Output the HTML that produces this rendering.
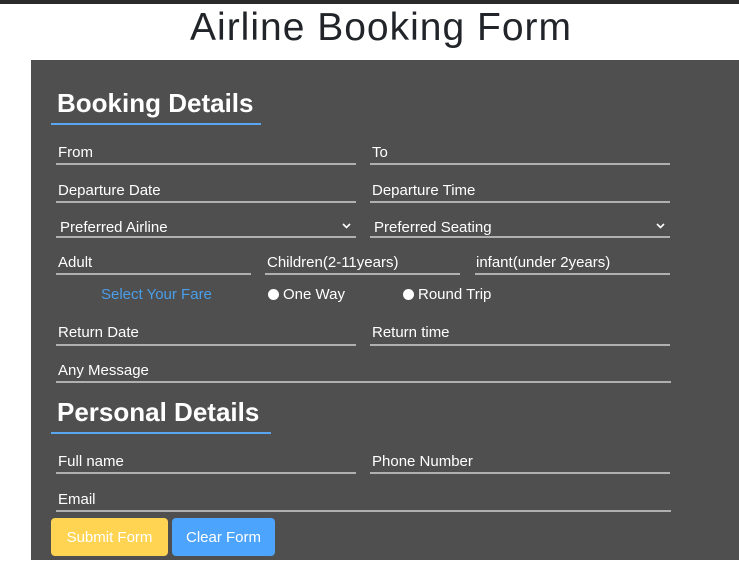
<!DOCTYPE html>
<html><head><style>
*{margin:0;padding:0;box-sizing:border-box}
body{width:739px;height:579px;background:#fff;font-family:"Liberation Sans",sans-serif;position:relative;overflow:hidden}
.top{position:absolute;left:0;top:0;width:739px;height:4px;background:#2b2b2b}
h1{position:absolute;left:0;width:762px;top:6px;text-align:center;font-size:39px;font-weight:normal;color:#212529;letter-spacing:1px}
.panel{position:absolute;left:31px;top:60px;width:708px;height:500px;background:#4f4f4f}
.a{position:absolute;color:#fff;font-size:15px;white-space:nowrap}
.l{position:absolute;height:2px;background:#b0b0b0}
.h{position:absolute;color:#fff;font-size:26px;font-weight:bold}
.u{position:absolute;height:2px;background:#5aa5f0}
.r{display:inline-block;width:11px;height:11px;border-radius:50%;background:#fff;vertical-align:-1px;margin-right:4px}
.btn{position:absolute;top:518px;height:38px;border-radius:4px;color:#fff;font-size:15px;line-height:40px;text-align:center}
.chev{position:absolute}
</style></head><body>
<div class="top"></div>
<h1>Airline Booking Form</h1>
<div class="panel"></div>
<div class="h" style="left:57px;top:88px">Booking Details</div>
<div class="u" style="left:51px;top:123px;width:210px"></div>
<div class="a" style="left:58px;top:144px">From</div><div class="l" style="left:56px;top:163px;width:300px"></div>
<div class="a" style="left:372px;top:144px">To</div><div class="l" style="left:370px;top:163px;width:300px"></div>
<div class="a" style="left:58px;top:182px">Departure Date</div><div class="l" style="left:56px;top:201px;width:300px"></div>
<div class="a" style="left:372px;top:182px">Departure Time</div><div class="l" style="left:370px;top:201px;width:300px"></div>
<div class="a" style="left:60px;top:219px">Preferred Airline</div><svg class="chev" style="left:342px;top:223px" width="9" height="6"><path d="M1 1L4.5 4.5L8 1" stroke="#fff" stroke-width="1.6" fill="none"/></svg><div class="l" style="left:56px;top:236px;width:300px"></div>
<div class="a" style="left:374px;top:219px">Preferred Seating</div><svg class="chev" style="left:656px;top:223px" width="9" height="6"><path d="M1 1L4.5 4.5L8 1" stroke="#fff" stroke-width="1.6" fill="none"/></svg><div class="l" style="left:370px;top:236px;width:300px"></div>
<div class="a" style="left:58px;top:254px">Adult</div><div class="l" style="left:56px;top:273px;width:195px"></div>
<div class="a" style="left:267px;top:254px">Children(2-11years)</div><div class="l" style="left:265px;top:273px;width:195px"></div>
<div class="a" style="left:476px;top:254px">infant(under 2years)</div><div class="l" style="left:475px;top:273px;width:195px"></div>
<div class="a" style="left:101px;top:286px;color:#4a9eea">Select Your Fare</div>
<div class="a" style="left:268px;top:286px"><span class="r"></span>One Way</div>
<div class="a" style="left:403px;top:286px"><span class="r"></span>Round Trip</div>
<div class="a" style="left:58px;top:324px">Return Date</div><div class="l" style="left:56px;top:344px;width:300px"></div>
<div class="a" style="left:372px;top:324px">Return time</div><div class="l" style="left:370px;top:344px;width:300px"></div>
<div class="a" style="left:58px;top:362px">Any Message</div><div class="l" style="left:56px;top:381px;width:615px"></div>
<div class="h" style="left:57px;top:397px">Personal Details</div>
<div class="u" style="left:51px;top:432px;width:220px"></div>
<div class="a" style="left:58px;top:453px">Full name</div><div class="l" style="left:56px;top:472px;width:300px"></div>
<div class="a" style="left:372px;top:453px">Phone Number</div><div class="l" style="left:370px;top:472px;width:300px"></div>
<div class="a" style="left:58px;top:491px">Email</div><div class="l" style="left:56px;top:510px;width:615px"></div>
<div class="btn" style="left:51px;width:117px;background:#ffd452">Submit Form</div>
<div class="btn" style="left:172px;width:103px;background:#4ca4fc">Clear Form</div>
</body></html>
